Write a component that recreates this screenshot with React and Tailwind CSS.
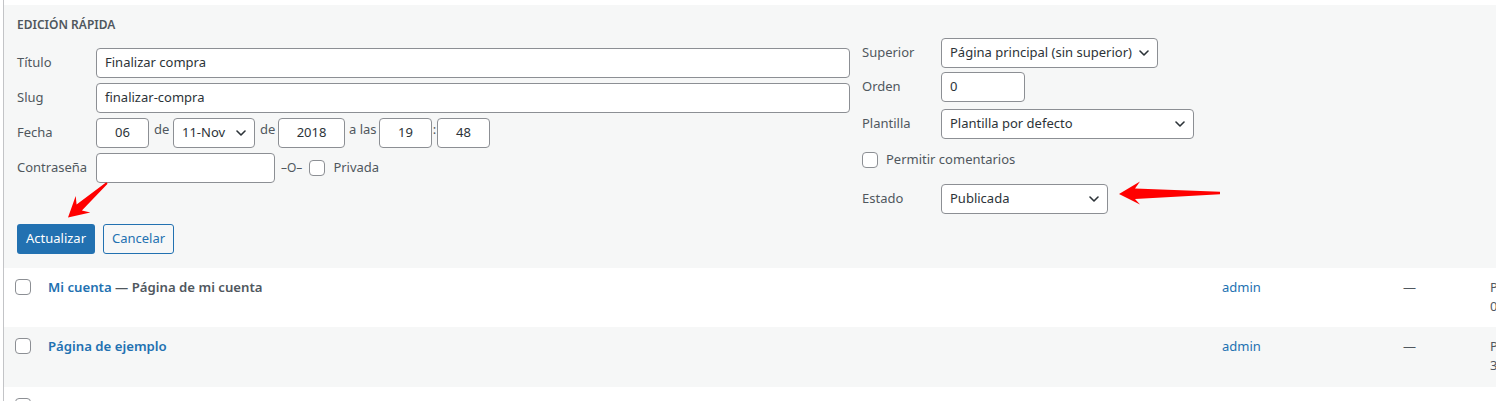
import React from 'react'

const font = "font-['Noto_Sans','Open_Sans',sans-serif]"

function Chevron() {
  return (
    <svg width="10" height="6" viewBox="0 0 10 6" className="shrink-0">
      <path d="M1 1l4 4 4-4" fill="none" stroke="#2c3338" strokeWidth="1.6" strokeLinecap="round" strokeLinejoin="round" />
    </svg>
  )
}

function Box({ w, children, center = false }) {
  return (
    <div className={`h-[30px] ${w} shrink-0 bg-white border border-[#8c8f94] rounded-[4px] flex items-center text-[13px] text-[#2c3338] ${center ? 'justify-center' : 'pl-[8px]'}`}>
      {children}
    </div>
  )
}

function Select({ w, children }) {
  return (
    <div className={`h-[30px] ${w} shrink-0 bg-white border border-[#8c8f94] rounded-[4px] flex items-center justify-between pl-[8px] pr-[8px] text-[13px] text-[#2c3338]`}>
      <span className="whitespace-nowrap">{children}</span>
      <Chevron />
    </div>
  )
}

function Checkbox() {
  return <div className="w-[16px] h-[16px] shrink-0 bg-white border border-[#8c8f94] rounded-[4px]" />
}

function Label({ children, w = 'w-[79px]' }) {
  return <div className={`${w} shrink-0 text-[13px] text-[#50575e]`}>{children}</div>
}

function Row({ bg, h, title, suffix, date }) {
  return (
    <div className={`${bg} ${h} flex items-start pt-[11px] pl-[11px] text-[13px]`}>
      <Checkbox />
      <div className="w-[1174px] ml-[17px] shrink-0 leading-[16px] text-[13.2px] font-semibold whitespace-nowrap">
        <span className="text-[#2271b1]">{title}</span>
        {suffix && <span className="text-[#50575e]"> {suffix}</span>}
      </div>
      <div className="w-[181px] shrink-0 leading-[16px] text-[#2271b1]">admin</div>
      <div className="w-[87px] shrink-0 leading-[16px] text-[#50575e]">—</div>
      <div className="leading-[19px] text-[#50575e] -mt-[1px] whitespace-nowrap">
        <div>Publicada</div>
        <div>{date}</div>
      </div>
    </div>
  )
}

export default function App() {
  return (
    <div className={`relative h-[401px] w-[1496px] overflow-hidden bg-white ${font}`}>
      <div className="ml-[3px] h-full border-l border-[#c3c4c7] pt-[5px]">
        {/* edición rápida */}
        <div className="bg-[#f6f7f7] pt-[10px] pb-[14px] pl-[13px]">
          <div className="flex">
            <div className="w-[833px] shrink-0">
              <div className="h-[20px] flex items-center text-[12px] font-semibold uppercase text-[#50575e]">Edición rápida</div>
              <div className="mt-[13px] flex flex-col gap-[5px]">
                <div className="flex items-center">
                  <Label>Título</Label>
                  <Box w="flex-1">Finalizar compra</Box>
                </div>
                <div className="flex items-center">
                  <Label>Slug</Label>
                  <Box w="flex-1">finalizar-compra</Box>
                </div>
                <div className="flex items-center text-[13px] text-[#50575e]">
                  <Label>Fecha</Label>
                  <Box w="w-[53px]" center>06</Box>
                  <span className="w-[24px] shrink-0 pl-[5px] -mt-[6px]">de</span>
                  <Select w="w-[82px]">11-Nov</Select>
                  <span className="w-[23px] shrink-0 pl-[5px] -mt-[6px]">de</span>
                  <Box w="w-[67px]" center>2018</Box>
                  <span className="w-[34px] shrink-0 pl-[4px] -mt-[6px] whitespace-nowrap">a las</span>
                  <Box w="w-[53px]" center>19</Box>
                  <span className="w-[5px] shrink-0 text-center -mt-[6px]">:</span>
                  <Box w="w-[53px]" center>48</Box>
                </div>
                <div className="flex items-center text-[13px] text-[#50575e]">
                  <Label>Contraseña</Label>
                  <Box w="w-[179px]"></Box>
                  <span className="ml-[6px] mr-[7px] text-[12px]">–O–</span>
                  <Checkbox />
                  <span className="ml-[8px]">Privada</span>
                </div>
              </div>
            </div>

            <div className="ml-[12px] mt-[23px]">
              <div className="flex items-center">
                <Label>Superior</Label>
                <Select w="w-[217px]">Página principal (sin superior)</Select>
              </div>
              <div className="flex items-center mt-[4px]">
                <Label>Orden</Label>
                <Box w="w-[84px]">0</Box>
              </div>
              <div className="flex items-center mt-[7px]">
                <Label>Plantilla</Label>
                <Select w="w-[253px]">Plantilla por defecto</Select>
              </div>
              <div className="flex items-center h-[16px] mt-[13px] text-[13px] text-[#50575e]">
                <Checkbox />
                <span className="ml-[8px]">Permitir comentarios</span>
              </div>
              <div className="flex items-center mt-[16px]">
                <Label>Estado</Label>
                <Select w="w-[167px]">Publicada</Select>
              </div>
            </div>
          </div>

          <div className="mt-[10px] flex gap-[8px] text-[13px]">
            <button className="h-[30px] w-[78px] rounded-[3px] bg-[#2271b1] text-white">Actualizar</button>
            <button className="h-[30px] w-[71px] rounded-[3px] border border-[#2271b1] text-[#2271b1] bg-[#f6f7f7]">Cancelar</button>
          </div>
        </div>

        <Row bg="bg-white" h="h-[59px]" title="Mi cuenta" suffix="— Página de mi cuenta" date="06/11/2018" />
        <Row bg="bg-[#f6f7f7]" h="h-[60px]" title="Página de ejemplo" date="31/10/2018" />
        <Row bg="bg-white" h="h-[60px]" title="carrito" suffix="— Finalizar compra" date="06/11/2018" />
      </div>

      {/* flechas rojas */}
      <svg className="absolute left-0 top-0 pointer-events-none" width="1496" height="401">
        <polygon fill="#f00" points="68,217.5 75.7,196 76.6,204.5 106.3,182.3 107.6,183.8 81.9,210.5 90.3,212.5" />
        <polygon fill="#f00" points="1119,194 1140,181.5 1135,188.5 1220,191.8 1220,194.2 1135,199 1140,204.5" />
      </svg>
    </div>
  )
}
